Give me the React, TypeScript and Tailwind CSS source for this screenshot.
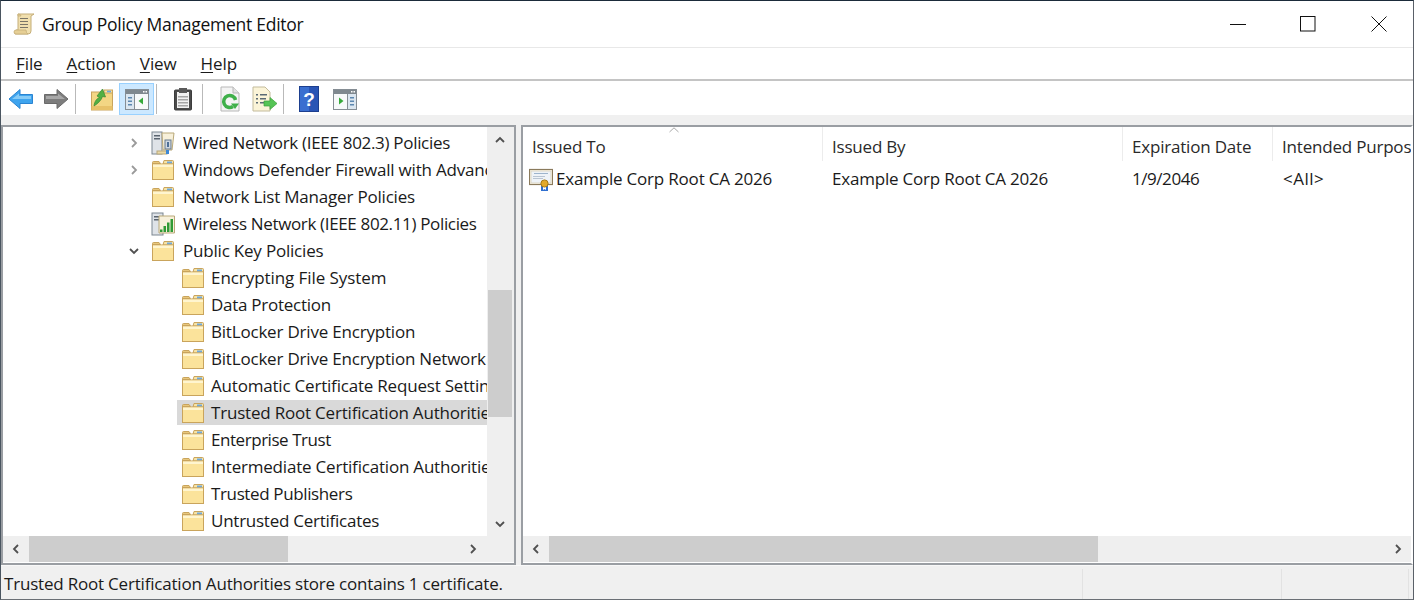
import React from "react";

const Folder = () => (
  <svg width="24" height="22" viewBox="0 0 24 22" className="shrink-0">
    <path d="M1.5 5.5V3.5Q1.5 2.5 2.5 2.5H8L9.5 4.5H1.5Z" fill="#e8c77c" stroke="#c9a45c" />
    <path d="M13 1.5H21.5Q22.5 1.5 22.5 2.5V5H12Z" fill="#f6e3a6" stroke="#c9a45c" />
    <rect x="16" y="2.5" width="5" height="2" fill="#6fa8dc" />
    <rect x="1.5" y="5" width="21" height="15.5" fill="#fbe39b" stroke="#c9a45c" />
    <rect x="2" y="5.5" width="20" height="2.5" fill="#fff5cf" />
  </svg>
);

const Chevron = ({ dir, light }: { dir: "r" | "d" | "l" | "u"; light?: boolean }) => {
  const d = { r: "M3 1l4 4-4 4", l: "M7 1L3 5l4 4", d: "M1 3l4 4 4-4", u: "M1 7l4-4 4 4" }[dir];
  return (
    <svg width="10" height="10" viewBox="0 0 10 10" className="shrink-0">
      <path d={d} fill="none" stroke={light ? "#9a9a9a" : "#505050"} strokeWidth="1.8" />
    </svg>
  );
};

const WiredIcon = () => (
  <svg width="24" height="24" viewBox="0 0 24 24" className="shrink-0">
    <rect x="1" y="1" width="10" height="22" fill="#dfe3e8" stroke="#7d8791" />
    <rect x="3" y="4" width="6" height="1.5" fill="#5b6570" />
    <rect x="3" y="7" width="6" height="1.5" fill="#5b6570" />
    <path d="M11 2H23L21 19H12Z" fill="#f7f0da" stroke="#b9a878" />
    <rect x="14" y="9" width="6" height="9" fill="#cfd8e2" stroke="#66798c" />
    <rect x="16" y="11" width="2" height="5" fill="#4d6f96" />
    <rect x="6" y="20" width="10" height="3" fill="#e9d9a8" stroke="#b9a878" />
    <rect x="15" y="19" width="3" height="4" fill="#3d88d6" />
  </svg>
);

const WirelessIcon = () => (
  <svg width="24" height="24" viewBox="0 0 24 24" className="shrink-0">
    <rect x="1" y="1" width="11" height="22" fill="#dfe3e8" stroke="#7d8791" />
    <rect x="3" y="4" width="7" height="1.5" fill="#5b6570" />
    <rect x="3" y="7" width="7" height="1.5" fill="#5b6570" />
    <path d="M8 4H23.500V21H8Z" fill="#f7f0da" stroke="#b9a878" />
    <path d="M9 20h2.500v-2.500H9zM12.500 20h2.500v-6h-2.500zM16 20h2.500v-9.500H16zM19.500 20H22V7h-2.500z" fill="#2f9a35" />
  </svg>
);

const CertIcon = () => (
  <svg width="24" height="24" viewBox="0 0 24 24" className="shrink-0">
    <rect x="0.5" y="2.5" width="23" height="15" fill="#fffdf3" stroke="#8a7a5c" strokeWidth="1.2" />
    <rect x="2" y="4" width="20" height="12" fill="#eef3f8" stroke="#d0c6a8" strokeWidth="0.6" />
    <rect x="5" y="6" width="14" height="1" fill="#9db4cc" />
    <rect x="4" y="9" width="12" height="1" fill="#b9c5d2" />
    <rect x="4" y="11" width="10" height="1" fill="#b9c5d2" />
    <path d="M12 18h2v5l1.5-1 1.5 1v-5h2v6h-7z" fill="#2f6fd0" />
    <circle cx="15.5" cy="16.5" r="3.6" fill="#e2a92a" stroke="#a67a16" />
  </svg>
);

const BackIcon = () => (
  <svg width="26" height="24" viewBox="0 0 26 24">
    <path d="M1 12L12 2.5V7.5H24.5V16.5H12V21.5Z" fill="#3ea4ee" stroke="#2a84d2" />
    <path d="M4 12L11 6.5V9H23V12Z" fill="#86cbf7" />
  </svg>
);
const ForwardIcon = () => (
  <svg width="26" height="24" viewBox="0 0 26 24">
    <path d="M25 12L14 2.5V7.5H1.5V16.5H14V21.5Z" fill="#7d7d7d" stroke="#6a6a6a" />
    <path d="M22 12L15 6.5V9H3V12Z" fill="#a8a8a8" />
  </svg>
);
const FolderUp = () => (
  <svg width="24" height="24" viewBox="0 0 24 24">
    <rect x="1.5" y="5" width="21" height="18" fill="#f3d684" stroke="#c9a45c" />
    <rect x="1.500" y="19" width="21" height="4" fill="#e8c26a" />
    <rect x="14" y="3" width="8.500" height="3" fill="#f6e3a6" stroke="#c9a45c" />
    <rect x="17" y="3.700" width="4" height="1.600" fill="#6fa8dc" />
    <path d="M4 19C4.500 14 7 11.500 9.500 10.500L7 9 12.500 2l3 8-3-.500C11.500 13 8 16.500 4 19Z" fill="#52b043" stroke="#3a8a30" strokeWidth="0.7" />
  </svg>
);
const PaneIcon = ({ flip }: { flip?: boolean }) => (
  <svg width="24" height="22" viewBox="0 0 24 22">
    <rect x="0.5" y="1.500" width="23" height="20" fill="#eef2f5" stroke="#858d94" />
    <rect x="1" y="2" width="22" height="4" fill="#7f888f" />
    <rect x="18" y="3" width="1.500" height="1.500" fill="#fff" />
    <rect x="20.500" y="3" width="1.500" height="1.500" fill="#fff" />
    {flip ? (
      <>
        <rect x="1" y="6" width="13" height="15" fill="#f7f9fa" />
        <path d="M6 9.500v7l4.500-3.500z" fill="#36a93a" />
        <rect x="14" y="6" width="1" height="15" fill="#858d94" />
        <rect x="15" y="6" width="8" height="15" fill="#dbe6f0" />
        <path d="M17 9h4v1.500h-4zM17 12.500h4V14h-4zM17 16h4v1.500h-4z" fill="#5c87b0" />
      </>
    ) : (
      <>
        <rect x="1" y="6" width="8" height="15" fill="#dbe6f0" />
        <path d="M3 9h4v1.500H3zM3 12.500h4V14H3zM3 16h4v1.500H3z" fill="#5c87b0" />
        <rect x="9" y="6" width="1" height="15" fill="#858d94" />
        <rect x="10" y="6" width="13" height="15" fill="#f7f9fa" />
        <path d="M18 9.500v7l-4.500-3.500z" fill="#36a93a" />
      </>
    )}
  </svg>
);
const ClipIcon = () => (
  <svg width="20" height="24" viewBox="0 0 20 24">
    <rect x="1.500" y="3" width="17" height="20" rx="1" fill="#4b4b4b" stroke="#3c3c3c" />
    <rect x="4" y="5" width="12" height="16" fill="#f2f2f2" />
    <path d="M5 9h10v1.500H5zM5 12h10v1.500H5zM5 15h10v1.500H5zM5 18h10v1.500H5z" fill="#a6a6a6" />
    <rect x="6" y="1" width="8" height="5" fill="#5a5a5a" />
  </svg>
);
const RefreshIcon = () => (
  <svg width="20" height="26" viewBox="0 0 20 26">
    <path d="M1 1H13L19 7V25H1Z" fill="#f4f4f4" stroke="#b8b8b8" />
    <path d="M13 1V7H19" fill="#e2e2e2" stroke="#b8b8b8" />
    <path d="M13 20.500A6 6 0 1 1 15.500 14" fill="none" stroke="#3fb04a" strokeWidth="3.500" />
    <path d="M11 17.500H19L15 23Z" fill="#3fb04a" />
  </svg>
);
const ExportIcon = () => (
  <svg width="26" height="26" viewBox="0 0 26 26">
    <path d="M1 1H13L18 6V25H1Z" fill="#fbf4d8" stroke="#c3bb9c" />
    <path d="M4 8h2v1.500H4zM8 8h7v1.500H8zM4 12h2v1.500H4zM8 12h6v1.500H8zM4 16h2v1.500H4zM8 16h5v1.500H8z" fill="#5b6a75" />
    <path d="M12 15h6v-3.500l7 6-7 6V20h-6z" fill="#55c455" stroke="#3ca03c" strokeWidth="0.7" />
  </svg>
);
const HelpIcon = () => (
  <svg width="20" height="26" viewBox="0 0 20 26">
    <rect x="0.500" y="0.500" width="19" height="25" fill="#2a55b5" stroke="#1d3f8f" />
    <rect x="1" y="1" width="9" height="24" fill="#3a6fd0" />
    <text x="10" y="20" textAnchor="middle" fontSize="19" fontWeight="700" fill="#fff" fontFamily="'Liberation Sans', sans-serif">?</text>
  </svg>
);
const ScrollIcon = () => (
  <svg width="22" height="24" viewBox="0 0 22 24">
    <path d="M5 2H21L18 4V19Q18 22 15 22H2Q1 20 3 18H5Z" fill="#f0dfae" stroke="#c5ae78" />
    <path d="M5 2Q8 2 8 4H5ZM1 20Q1 22 3 22H15Q13 21 13 18H3Q1 18 1 20Z" fill="#e6cf95" stroke="#c5ae78" strokeWidth="0.8" />
    <path d="M7 6h8v1H7zM7 9h8v1H7zM7 12h8v1H7zM7 15h8v1H7z" fill="#7a7568" />
  </svg>
);

const Sep = () => <div className="w-px h-[30px] bg-[#b9b9b9] shrink-0" />;

const Tool = ({ children, active, w, className = "" }: { children: React.ReactNode; active?: boolean; w: string; className?: string }) => (
  <div className={`${w} ${className} h-[32px] flex items-center justify-center shrink-0 border ${active ? "bg-[#cce8ff] border-[#99d1ff]" : "border-transparent"}`}>
    {children}
  </div>
);

const Row = ({
  label, level = 1, chev, icon, selected, track = "",
}: { label: string; level?: 1 | 2; chev?: "r" | "d"; icon?: React.ReactNode; selected?: boolean; track?: string }) => (
  <div className="h-[27px] flex items-center whitespace-nowrap">
    {level === 1 ? (
      <div className="w-[136px] shrink-0 flex justify-end">
        {chev && <Chevron dir={chev} light={chev === "r"} />}
      </div>
    ) : (
      <div className="w-[174px] shrink-0" />
    )}
    <div className={`flex items-center flex-1 min-w-0 h-[25px] overflow-hidden ${selected ? "bg-[#d9d9d9]" : ""} ${level === 1 ? "pl-[12px]" : "pl-[4px]"}`}>
      {icon ?? <Folder />}
      <span className={`${level === 1 ? "ml-[8px]" : "ml-[6px]"} ${track}`}>{label}</span>
    </div>
  </div>
);

export default function App() {
  return (
    <div className="w-[1414px] h-[600px] overflow-hidden flex flex-col bg-[#f0f0f0] border-t border-l border-r border-b border-t-[#1b2b3a] border-l-[#4a5560] border-r-[#5a6068] border-b-[#6a6f75] text-[#1a1a1a] text-[17px] tracking-[-0.2px] font-['Open_Sans',sans-serif]">
      <div className="h-[46px] bg-white flex items-center pl-[12px] shrink-0">
        <ScrollIcon />
        <span className="ml-[7px] text-[#111] text-[17.5px] tracking-[-0.27px]">Group Policy Management Editor</span>
        <div className="ml-auto flex items-center">
          <svg width="16" height="16" viewBox="0 0 16 16" className="mr-[54px]"><path d="M0 8.500H16" stroke="#111" /></svg>
          <svg width="16" height="16" viewBox="0 0 16 16" className="mr-[55px]"><rect x="0.500" y="0.500" width="14.500" height="14.500" fill="none" stroke="#111" /></svg>
          <svg width="16" height="16" viewBox="0 0 16 16" className="mr-[26px]"><path d="M0.500 0.500L15.500 15.500M15.500 0.500L0.500 15.500" stroke="#111" /></svg>
        </div>
      </div>
      <div className="h-[34px] bg-white border-t border-[#e8e8e8] border-b-2 border-b-[#c4c4c4] flex items-center pl-[15px] pt-[1px] gap-[24px] shrink-0 tracking-[-0.1px]">
        <span><u className="underline-offset-2">F</u>ile</span>
        <span><u className="underline-offset-2">A</u>ction</span>
        <span><u className="underline-offset-2">V</u>iew</span>
        <span><u className="underline-offset-2">H</u>elp</span>
      </div>
      <div className="h-[34px] bg-white flex items-center pl-[4px] pt-[2px] shrink-0">
        <Tool w="w-[31px]"><BackIcon /></Tool>
        <Tool w="w-[39px]"><ForwardIcon /></Tool>
        <Sep />
        <Tool w="w-[43px]" className="pl-[8px]"><FolderUp /></Tool>
        <Tool w="w-[35px]" active><PaneIcon /></Tool>
        <div className="w-[2px] shrink-0" />
        <Sep />
        <Tool w="w-[45px]" className="pl-[6px]"><ClipIcon /></Tool>
        <Sep />
        <Tool w="w-[44px]" className="pl-[9px]"><RefreshIcon /></Tool>
        <Tool w="w-[36px]"><ExportIcon /></Tool>
        <Sep />
        <Tool w="w-[46px]" className="pl-[4px]"><HelpIcon /></Tool>
        <Tool w="w-[30px]"><PaneIcon flip /></Tool>
      </div>
      <div className="h-[10px] bg-[#f0f0f0] shrink-0" />
      <div className="flex h-[440px] gap-[5px] shrink-0">
        <div className="w-[515px] shrink-0 border-2 border-[#9a9ea3] bg-white flex flex-col pb-[1px]">
          <div className="flex flex-1 min-h-0">
            <div className="flex-1 min-w-0 overflow-hidden pt-[2px]">
              <Row label="Wired Network (IEEE 802.3) Policies" chev="r" icon={<WiredIcon />} track="tracking-[-0.31px]" />
              <Row label="Windows Defender Firewall with Advanced Security" chev="r" />
              <Row label="Network List Manager Policies" />
              <Row label="Wireless Network (IEEE 802.11) Policies" icon={<WirelessIcon />} track="tracking-[-0.35px]" />
              <Row label="Public Key Policies" chev="d" />
              <Row level={2} label="Encrypting File System" track="tracking-[-0.07px]" />
              <Row level={2} label="Data Protection" track="tracking-[-0.27px]" />
              <Row level={2} label="BitLocker Drive Encryption" />
              <Row level={2} label="BitLocker Drive Encryption Network Unlock Certificate" />
              <Row level={2} label="Automatic Certificate Request Settings" />
              <Row level={2} label="Trusted Root Certification Authorities" selected />
              <Row level={2} label="Enterprise Trust" track="tracking-[-0.45px]" />
              <Row level={2} label="Intermediate Certification Authorities" />
              <Row level={2} label="Trusted Publishers" track="tracking-[-0.37px]" />
              <Row level={2} label="Untrusted Certificates" track="tracking-[-0.25px]" />
            </div>
            <div className="w-[27px] shrink-0 bg-[#efefef] flex flex-col pl-[1px] pr-[2px]">
              <div className="h-[25px] flex items-center justify-center"><Chevron dir="u" /></div>
              <div className="flex-1 flex flex-col">
                <div className="h-[138px]" />
                <div className="h-[127px] bg-[#cdcdcd]" />
              </div>
              <div className="h-[25px] flex items-center justify-center"><Chevron dir="d" /></div>
            </div>
          </div>
          <div className="h-[26px] shrink-0 bg-[#efefef] flex items-center">
            <div className="w-[26px] flex justify-center"><Chevron dir="l" /></div>
            <div className="w-[259px] h-full bg-[#cdcdcd]" />
            <div className="flex-1" />
            <div className="w-[27px] mr-[28px] flex justify-center"><Chevron dir="r" /></div>
          </div>
        </div>
        <div className="flex-1 min-w-0 border-2 border-[#9a9ea3] border-r-white bg-white flex flex-col pb-[1px]">
          <div className="flex-1 min-h-0 relative overflow-hidden">
            <div className="absolute left-[146px] top-[0px]">
              <svg width="10" height="6" viewBox="0 0 10 6"><path d="M0.500 5L5 0.800L9.500 5" fill="none" stroke="#a8a8a8" /></svg>
            </div>
            <div className="h-[36px] flex items-end whitespace-nowrap pb-[2px]">
              {[
                { t: "Issued To", w: "w-[300px]" },
                { t: "Issued By", w: "w-[300px]" },
                { t: "Expiration Date", w: "w-[150px]" },
                { t: "Intended Purposes", w: "w-[200px]" },
              ].map(({ t, w }) => (
                <div key={t} className={`${w} h-[34px] pl-[9px] flex items-center shrink-0 border-r border-[#ececec] text-[#2a2a2a] pt-[6px]`}>{t}</div>
              ))}
            </div>
            <div className="h-[28px] flex items-center whitespace-nowrap mt-[2px]">
              <div className="w-[300px] shrink-0 flex items-center pl-[6px]">
                <CertIcon />
                <span className="ml-[3px]">Example Corp Root CA 2026</span>
              </div>
              <div className="w-[300px] shrink-0 pl-[9px]">Example Corp Root CA 2026</div>
              <div className="w-[150px] shrink-0 pl-[9px] tracking-[-0.45px]">1/9/2046</div>
              <div className="w-[200px] shrink-0 pl-[10px] tracking-[0.5px]">&lt;All&gt;</div>
            </div>
          </div>
          <div className="h-[26px] shrink-0 bg-[#efefef] flex items-center">
            <div className="w-[26px] flex justify-center"><Chevron dir="l" /></div>
            <div className="w-[549px] h-full bg-[#cdcdcd]" />
            <div className="flex-1" />
            <div className="w-[27px] flex justify-center"><Chevron dir="r" /></div>
          </div>
        </div>
      </div>
      <div className="flex-1 min-h-0 bg-[#f0f0f0] flex border-t border-[#f8f8f8] whitespace-nowrap">
        <div className="w-[1081px] shrink-0 pl-[3px] pt-[5px] text-[#1a1a1a]">Trusted Root Certification Authorities store contains 1 certificate.</div>
        <div className="w-[199px] shrink-0 border-l border-[#e2e2e2] mt-[3px]" />
        <div className="w-[128px] shrink-0 border-l border-[#e2e2e2] border-r mt-[3px]" />
      </div>
    </div>
  );
}
